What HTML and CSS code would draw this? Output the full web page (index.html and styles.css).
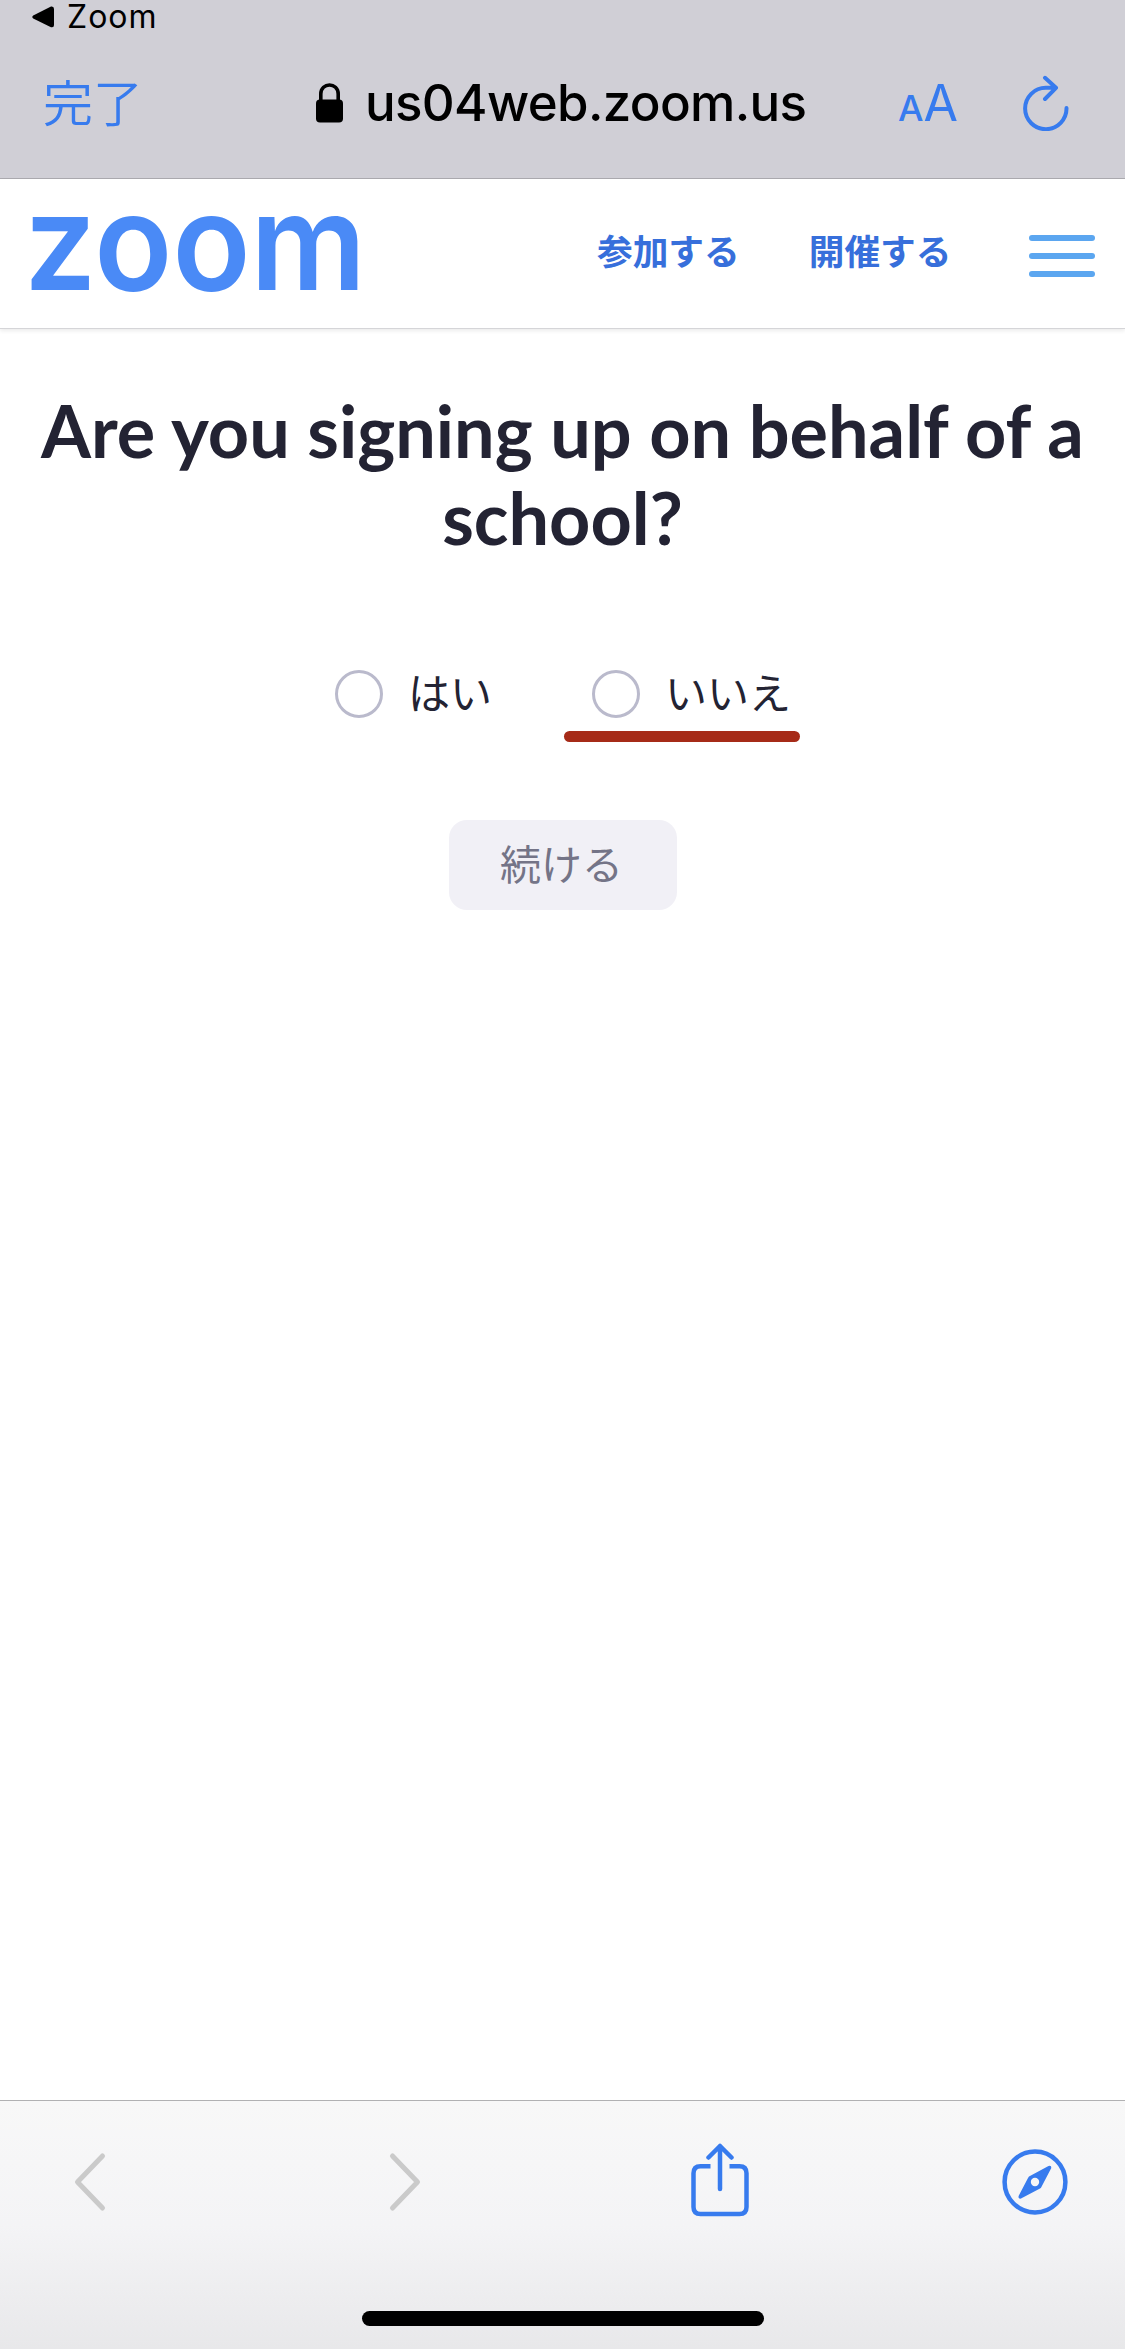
FILE: index.html
```html
<!DOCTYPE html>
<html lang="ja">
<head>
  <meta charset="UTF-8">
  <meta name="viewport" content="width=device-width, initial-scale=1.0">
  <title>Zoom</title>
  <link rel="stylesheet" href="styles.css">
</head>
<body>
  <header class="browser-bar">
    <div class="back-app">
      <svg width="22" height="22" viewBox="0 0 22 22"><path d="M1.2 9.5 19 .6Q22 0 22 3v16q0 3-3 2.200L1.200 12.500Q-.600 11 1.200 9.500Z"/></svg>
      <span class="back-label">Zoom</span>
    </div>
    <div class="address-row">
      <a class="done">完了</a>
      <svg class="lock" width="27" height="40" viewBox="0 0 27 40">
        <path d="M4.800 19V11C4.800-1 22.200-1 22.200 11v8" fill="none" stroke="#000" stroke-width="3.600"/>
        <rect y="16.500" width="27" height="23" rx="4"/>
      </svg>
      <span class="url">us04web.zoom.us</span>
      <span class="text-size"><span class="small-a">A</span><span class="big-a">A</span></span>
      <svg class="reload" width="48" height="56" viewBox="0 0 48 56" fill="none" stroke="#377bee" stroke-width="4" stroke-linecap="round" stroke-linejoin="round">
        <path d="M44.500 33A20.700 20.700 0 1 1 24 12.800H34M23 2.800l11 10L23 24"/>
      </svg>
    </div>
  </header>

  <nav class="site-nav">
    <svg class="logo" width="332" height="78" viewBox="0 0 332 78">
      <text x="-6" y="75" textLength="342" lengthAdjust="spacingAndGlyphs">zoom</text>
    </svg>
    <a class="nav-link">参加する</a>
    <a class="nav-link host">開催する</a>
    <div class="menu"><i></i><i></i><i></i></div>
  </nav>

  <main class="content">
    <h1>Are you signing up on behalf of a school?</h1>
    <div class="options">
      <label class="option"><span class="radio"></span><span class="answer">はい</span></label>
      <label class="option marked"><span class="radio"></span><span class="answer">いいえ</span></label>
    </div>
    <button class="continue" disabled>続ける</button>
  </main>

  <footer class="toolbar">
    <div class="tools">
      <svg width="66" height="60" viewBox="0 0 33 60" fill="none" stroke="#cacaca" stroke-width="5" stroke-linecap="round" stroke-linejoin="round"><path d="M29 4 4 30l25 26"/></svg>
      <svg width="66" height="60" viewBox="0 0 33 60" fill="none" stroke="#cacaca" stroke-width="5" stroke-linecap="round" stroke-linejoin="round"><path d="M4 4l25 26L4 56"/></svg>
      <svg class="share" width="66" height="74" viewBox="0 0 58 74" fill="none" stroke="#377bee" stroke-width="4.500" stroke-linecap="round" stroke-linejoin="round">
        <path d="M19.500 23.300H9.500Q2.500 23.300 2.500 30.300V64q0 7 7 7h39q7 0 7-7V30.300q0-7-7-7h-10" stroke-linecap="butt"/>
        <path d="M29 46V3M17.500 14.500 29 3l11.500 11.500"/>
      </svg>
      <svg width="66" height="66" viewBox="0 0 66 66">
        <circle cx="33" cy="33" r="30.400" fill="none" stroke="#377bee" stroke-width="4.500"/>
        <path d="M46.500 17 27 27.500Q26.500 28 26 29L16.600 47q-.6 3 2.400 2.600L38 39.500q1-.5 1.400-1.500L49.300 19q.2-3-2.800-2Z" fill="#377bee"/>
        <circle cx="33" cy="33" r="4.200" fill="#f6f6f7"/>
      </svg>
    </div>
    <div class="home-indicator"></div>
  </footer>
</body>
</html>
```

FILE: styles.css
```css
* { box-sizing: border-box; }
body {
  margin: 0;
  height: 2349px;
  display: flex;
  flex-direction: column;
  background: #fff;
  color: #232333;
  font-family: "Noto Sans CJK JP", sans-serif;
}
svg { display: block; flex: none; }

/* browser chrome */
.browser-bar {
  height: 179px;
  background: #d0cfd6;
  border-bottom: 1px solid #acabb0;
  color: #000;
}
.back-app {
  display: flex;
  align-items: center;
  height: 34px;
  padding-left: 32px;
}
.back-label {
  margin-left: 13px;
  font: 32px/34px Inter, sans-serif;
  letter-spacing: 1px;
}
.address-row {
  display: flex;
  align-items: center;
  height: 138px;
  padding-left: 43px;
  white-space: nowrap;
}
.done {
  width: 273px;
  padding-bottom: 7px;
  color: #377bee;
  font-size: 50px;
  font-weight: 350;
  line-height: 60px;
}
.lock { margin-bottom: 1px; }
.url {
  width: 555px;
  padding-left: 22px;
  font: 500 51px/60px Inter, sans-serif;
  letter-spacing: -0.65px;
}
.text-size {
  display: flex;
  align-items: baseline;
  width: 124px;
  padding-top: 4px;
  color: #377bee;
  font-family: Inter, sans-serif;
  line-height: 60px;
}
.small-a { font-size: 36px; font-weight: 500; }
.big-a { font-size: 50px; }

/* site header */
.site-nav {
  display: flex;
  align-items: flex-start;
  height: 150px;
  padding: 36px 30px 0;
  border-bottom: 1px solid #d5d5d8;
  box-shadow: 0 2px 4px rgba(0, 0, 0, 0.08);
}
.logo { overflow: visible; }
.logo text {
  font: 600 134px Inter, sans-serif;
  fill: #4a8af6;
}
.nav-link {
  margin-left: 235px;
  color: #376fdb;
  font-size: 35.7px;
  font-weight: 700;
  line-height: 70px;
  white-space: nowrap;
}
.nav-link.host { margin-left: 69px; }
.menu {
  display: flex;
  flex-direction: column;
  gap: 12px;
  width: 66px;
  margin: 20px 0 0 auto;
}
.menu i {
  height: 6px;
  border-radius: 3px;
  background: #5ba6f0;
}

/* form */
.content {
  flex: 1;
  display: flex;
  flex-direction: column;
  align-items: center;
  padding-top: 58px;
}
h1 {
  margin: 0;
  font: 700 72px/87px Lato, sans-serif;
  text-align: center;
}
.options {
  display: flex;
  width: 455px;
  gap: 100px;
  margin-top: 101px;
  height: 72px;
}
.option {
  position: relative;
  display: flex;
  align-items: center;
  gap: 25px;
  height: 72px;
  margin-top: -4px;
  font-size: 42px;
  white-space: nowrap;
}
.answer { padding-bottom: 8px; }
.radio {
  flex: none;
  width: 48px;
  height: 48px;
  border: 3px solid #babacc;
  border-radius: 50%;
}
/* red marker stroke under the answer */
.marked::after {
  content: "";
  position: absolute;
  left: -28px;
  bottom: -12px;
  width: 236px;
  height: 11px;
  border-radius: 6px;
  background: #a62b18;
}
.continue {
  width: 228px;
  height: 90px;
  margin-top: 86px;
  padding: 0 2px 6px 0;
  border: 0;
  border-radius: 18px;
  background: #f1f0f6;
  color: #747487;
  font: 400 41px "Noto Sans CJK JP", sans-serif;
}

/* bottom toolbar */
.toolbar {
  height: 249px;
  border-top: 1px solid #b1b1b3;
  background: linear-gradient(#f8f8f8, #f4f4f6 50%, #e8e8ea);
}
.tools {
  display: flex;
  justify-content: space-between;
  align-items: center;
  height: 161px;
  padding: 0 57px;
}
.share { margin-bottom: 3px; }
.home-indicator {
  width: 402px;
  height: 15px;
  margin: 49px auto 0;
  border-radius: 8px;
  background: #000;
}
```
